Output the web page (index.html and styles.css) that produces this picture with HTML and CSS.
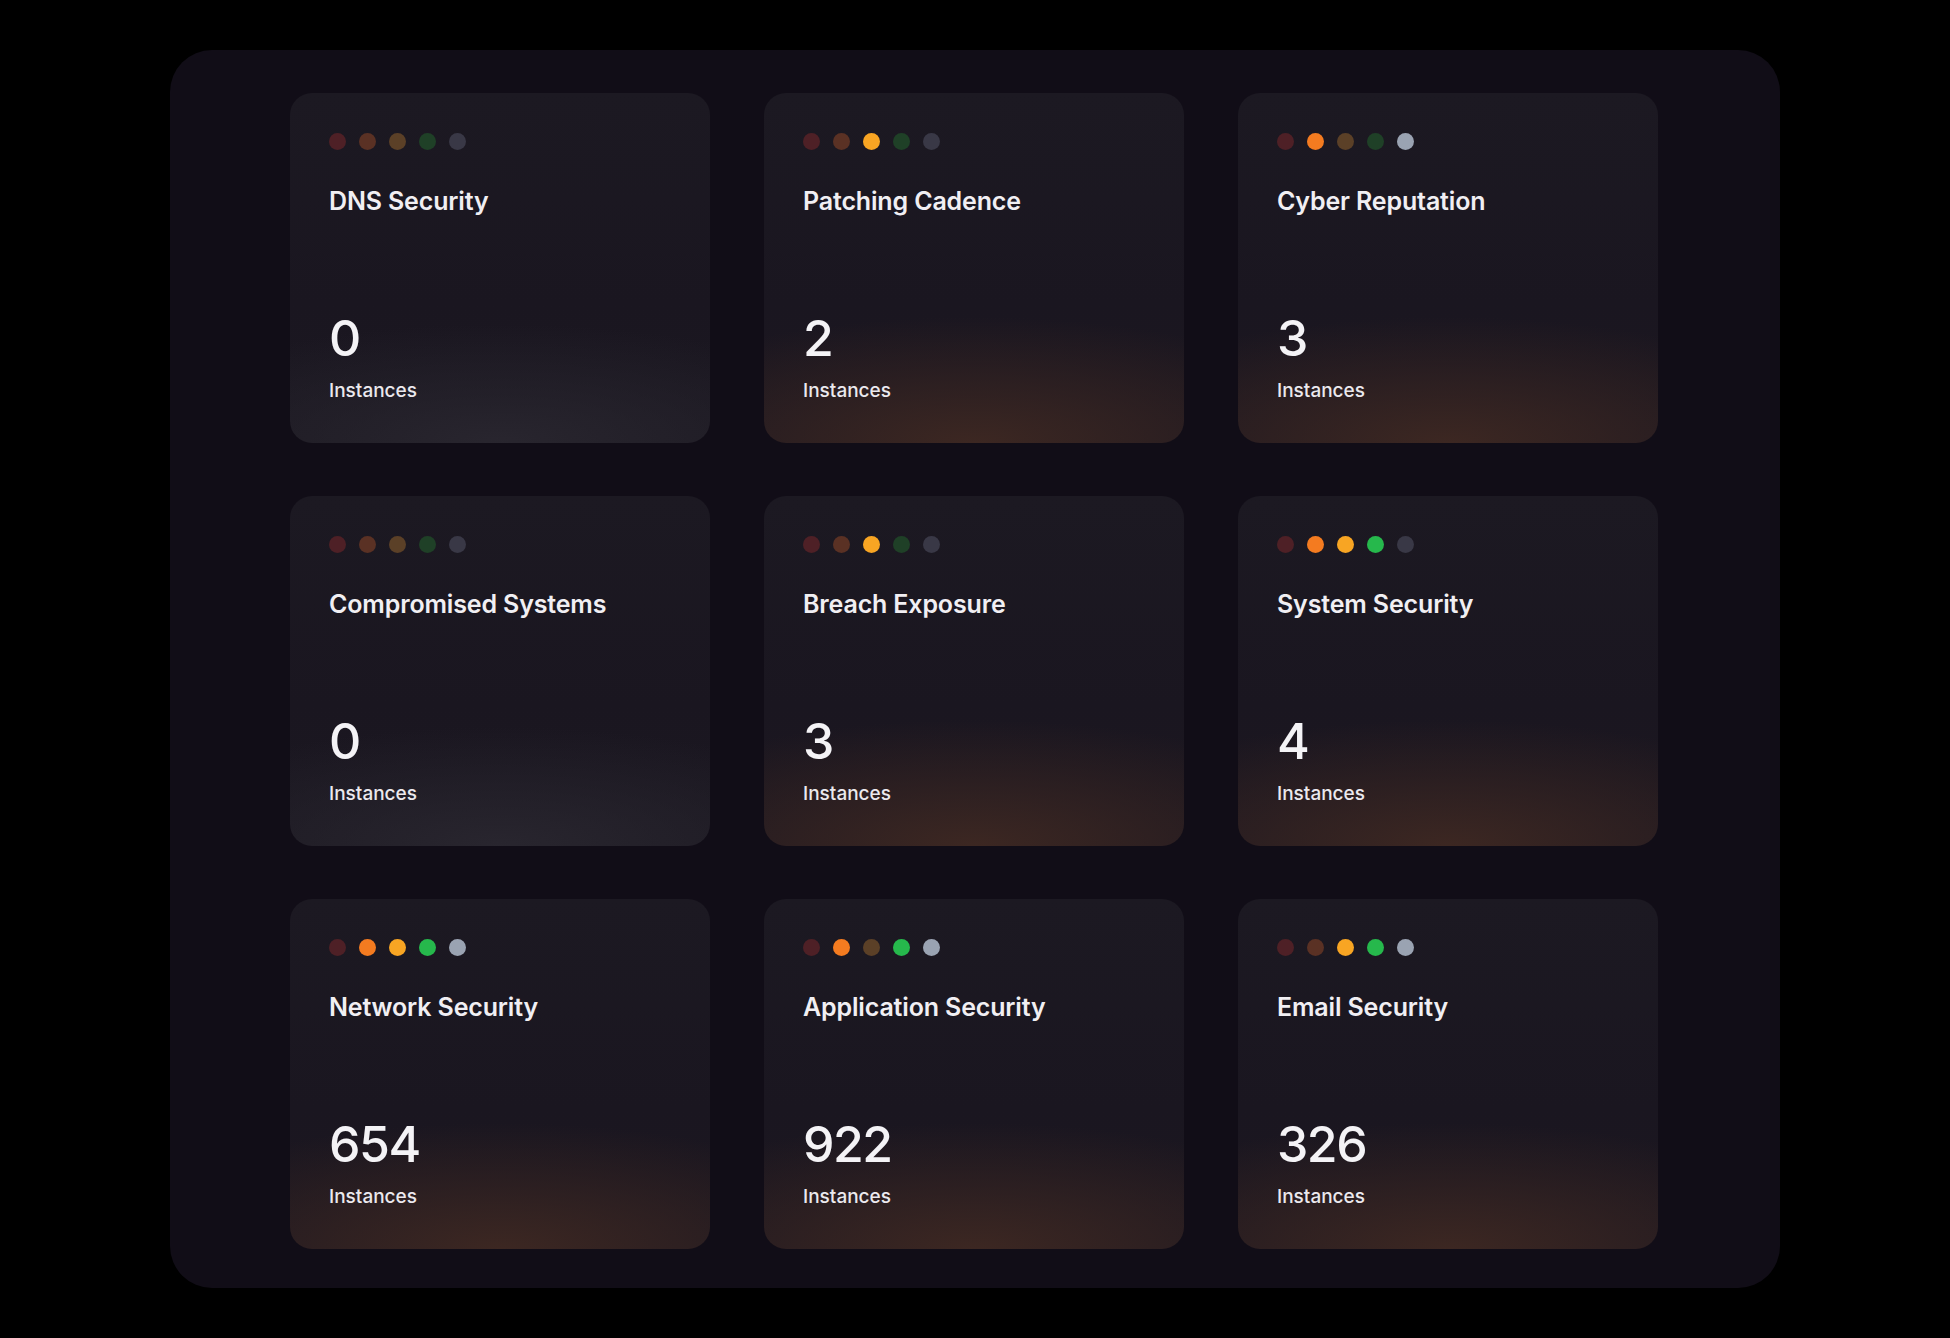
FILE: index.html
```html
<!DOCTYPE html>
<html lang="en">
<head>
<meta charset="utf-8">
<title>Security Categories</title>
<link rel="stylesheet" href="styles.css">
</head>
<body>
<main class="panel">
  <section class="grid">
    <article class="card card-neutral">
      <div class="dots"><span class="dot red"></span><span class="dot orange"></span><span class="dot amber"></span><span class="dot green"></span><span class="dot gray"></span></div>
      <h2 class="title">DNS Security</h2>
      <div class="stat"><div class="value">0</div><div class="label">Instances</div></div>
    </article>
    <article class="card card-warm">
      <div class="dots"><span class="dot red"></span><span class="dot orange"></span><span class="dot amber on"></span><span class="dot green"></span><span class="dot gray"></span></div>
      <h2 class="title">Patching Cadence</h2>
      <div class="stat"><div class="value">2</div><div class="label">Instances</div></div>
    </article>
    <article class="card card-warm">
      <div class="dots"><span class="dot red"></span><span class="dot orange on"></span><span class="dot amber"></span><span class="dot green"></span><span class="dot gray on"></span></div>
      <h2 class="title">Cyber Reputation</h2>
      <div class="stat"><div class="value">3</div><div class="label">Instances</div></div>
    </article>
    <article class="card card-neutral">
      <div class="dots"><span class="dot red"></span><span class="dot orange"></span><span class="dot amber"></span><span class="dot green"></span><span class="dot gray"></span></div>
      <h2 class="title">Compromised Systems</h2>
      <div class="stat"><div class="value">0</div><div class="label">Instances</div></div>
    </article>
    <article class="card card-warm">
      <div class="dots"><span class="dot red"></span><span class="dot orange"></span><span class="dot amber on"></span><span class="dot green"></span><span class="dot gray"></span></div>
      <h2 class="title">Breach Exposure</h2>
      <div class="stat"><div class="value">3</div><div class="label">Instances</div></div>
    </article>
    <article class="card card-warm">
      <div class="dots"><span class="dot red"></span><span class="dot orange on"></span><span class="dot amber on"></span><span class="dot green on"></span><span class="dot gray"></span></div>
      <h2 class="title">System Security</h2>
      <div class="stat"><div class="value">4</div><div class="label">Instances</div></div>
    </article>
    <article class="card card-warm">
      <div class="dots"><span class="dot red"></span><span class="dot orange on"></span><span class="dot amber on"></span><span class="dot green on"></span><span class="dot gray on"></span></div>
      <h2 class="title">Network Security</h2>
      <div class="stat"><div class="value">654</div><div class="label">Instances</div></div>
    </article>
    <article class="card card-warm">
      <div class="dots"><span class="dot red"></span><span class="dot orange on"></span><span class="dot amber"></span><span class="dot green on"></span><span class="dot gray on"></span></div>
      <h2 class="title">Application Security</h2>
      <div class="stat"><div class="value">922</div><div class="label">Instances</div></div>
    </article>
    <article class="card card-warm">
      <div class="dots"><span class="dot red"></span><span class="dot orange"></span><span class="dot amber on"></span><span class="dot green on"></span><span class="dot gray on"></span></div>
      <h2 class="title">Email Security</h2>
      <div class="stat"><div class="value">326</div><div class="label">Instances</div></div>
    </article>
  </section>
</main>
</body>
</html>
```

FILE: styles.css
```css
* { box-sizing: border-box; }

html, body {
  margin: 0;
  padding: 0;
  background: #000;
}

body {
  padding: 50px 170px;
  font-family: Inter, "Noto Sans", "Liberation Sans", sans-serif;
  color: #f2f0f4;
}

.panel {
  height: 1238px;
  background: #110d17;
  border-radius: 42px;
  padding: 43px 120px 39px 120px;
}

.grid {
  display: grid;
  grid-template-columns: repeat(3, 420px);
  grid-auto-rows: 350px;
  column-gap: 54px;
  row-gap: 53px;
}

.card {
  display: flex;
  flex-direction: column;
  border-radius: 22px;
  padding: 40px 40px 40px 39px;
  background-color: #1b1721;
}

.card-neutral {
  background-image:
    radial-gradient(ellipse 95% 34% at 50% 100%, rgba(42, 39, 48, 0.9), rgba(42, 39, 48, 0) 100%),
    linear-gradient(180deg, #1c1922 0%, #1a1620 60%, #1b1821 100%);
}

.card-warm {
  background-image:
    radial-gradient(ellipse 95% 36% at 50% 100%, rgba(62, 40, 34, 0.95), rgba(55, 36, 32, 0) 100%),
    linear-gradient(180deg, #1c1922 0%, #1a1620 60%, #1c1720 100%);
}

.dots {
  display: flex;
  gap: 13px;
  height: 17px;
}

.dot {
  width: 17px;
  height: 17px;
  border-radius: 50%;
  flex: none;
}

.dot.red { background: #4e2026; }
.dot.orange { background: #5a3124; }
.dot.amber { background: #5b4027; }
.dot.green { background: #1f4027; }
.dot.gray { background: #393846; }

.dot.orange.on { background: #f47b20; }
.dot.amber.on { background: #f8a523; }
.dot.green.on { background: #26b84c; }
.dot.gray.on { background: #9aa3b2; }

.title {
  margin: 35px 0 0;
  font-size: 25px;
  line-height: 32px;
  font-weight: 600;
  letter-spacing: -0.15px;
  color: #f1eff3;
}

.stat {
  margin-top: auto;
}

.value {
  font-size: 50px;
  line-height: 50px;
  font-weight: 500;
  letter-spacing: -1.5px;
  color: #f4f3f6;
}

.label {
  margin-top: 16px;
  font-size: 19px;
  line-height: 24px;
  font-weight: 500;
  color: #ebe9ee;
}
```
